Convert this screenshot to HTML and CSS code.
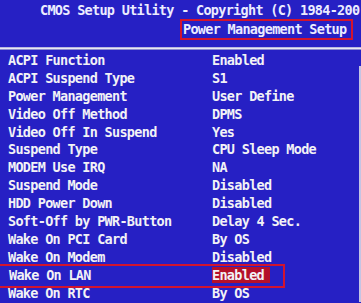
FILE: index.html
```html
<!DOCTYPE html>
<html lang="en">
<head>
    <meta charset="UTF-8">
    <meta name="viewport" content="width=device-width, initial-scale=1.0">
    <title>Power Management Setup</title>
    <link rel="stylesheet" href="styles.css">
</head>
<body>
    <div class="bios">
        <div class="header">
            <div class="title">CMOS Setup Utility - Copyright (C) 1984-200</div>
            <div class="subtitle"><span class="page-name">Power Management Setup</span></div>
        </div>
        <div class="rule"></div>
        <div class="panel">
            <div class="items">
                <div class="row"><span class="label">ACPI Function</span><span class="value">Enabled</span></div>
                <div class="row"><span class="label">ACPI Suspend Type</span><span class="value">S1</span></div>
                <div class="row"><span class="label">Power Management</span><span class="value">User Define</span></div>
                <div class="row"><span class="label">Video Off Method</span><span class="value">DPMS</span></div>
                <div class="row"><span class="label">Video Off In Suspend</span><span class="value">Yes</span></div>
                <div class="row"><span class="label">Suspend Type</span><span class="value">CPU Sleep Mode</span></div>
                <div class="row"><span class="label">MODEM Use IRQ</span><span class="value">NA</span></div>
                <div class="row"><span class="label">Suspend Mode</span><span class="value">Disabled</span></div>
                <div class="row"><span class="label">HDD Power Down</span><span class="value">Disabled</span></div>
                <div class="row"><span class="label">Soft-Off by PWR-Button</span><span class="value">Delay 4 Sec.</span></div>
                <div class="row"><span class="label">Wake On PCI Card</span><span class="value">By OS</span></div>
                <div class="row"><span class="label">Wake On Modem</span><span class="value">Disabled</span></div>
                <div class="row selected"><span class="label">Wake On LAN</span><span class="value"><span class="cursor">Enabled</span></span></div>
                <div class="row"><span class="label">Wake On RTC</span><span class="value">By OS</span></div>
            </div>
            <div class="help-edge"></div>
        </div>
    </div>
</body>
</html>
```

FILE: styles.css
```css
body {
    margin: 0;
    background-color: #2620c4;
    color: #f2f2f6;
    font-family: 'DejaVu Sans Mono', 'Liberation Mono', monospace;
    font-weight: bold;
    font-size: 13.5px;
    letter-spacing: -0.7px;
    overflow: hidden;
}
.bios {
    width: 361px;
    height: 303px;
    overflow: hidden;
}
.header {
    padding-top: 2px;
}
.title {
    padding-left: 40px;
    line-height: 17px;
    white-space: nowrap;
    color: #ececff;
}
.subtitle {
    padding-left: 180px;
    height: 21px;
}
.page-name {
    display: inline-block;
    width: 168px;
    height: 17px;
    padding-left: 1px;
    line-height: 17px;
    border: 2px solid #d2142e;
    white-space: nowrap;
    color: #ececff;
}
.rule {
    margin-top: 7px;
    height: 1px;
    border-top: 1px solid #b8b8e0;
    border-bottom: 1px solid #8c8cd0;
    background-color: #e8e8f4;
}
.panel {
    display: flex;
    padding-top: 2px;
}
.items {
    flex: 1;
}
.row {
    display: flex;
    height: 17.9px;
    line-height: 17.9px;
    white-space: nowrap;
}
.label {
    width: 204px;
    padding-left: 8px;
}
.row.selected {
    width: 281px;
    margin-left: 1px;
    outline: 2px solid #d2142e;
    outline-offset: 1px;
}
.row.selected .label {
    width: 203px;
}
.cursor {
    display: inline-block;
    background-color: #b4102a;
    padding-right: 6px;
    line-height: 16px;
}
.help-edge {
    width: 2px;
    margin-top: 14px;
    background-color: #c4c4e4;
}
```
